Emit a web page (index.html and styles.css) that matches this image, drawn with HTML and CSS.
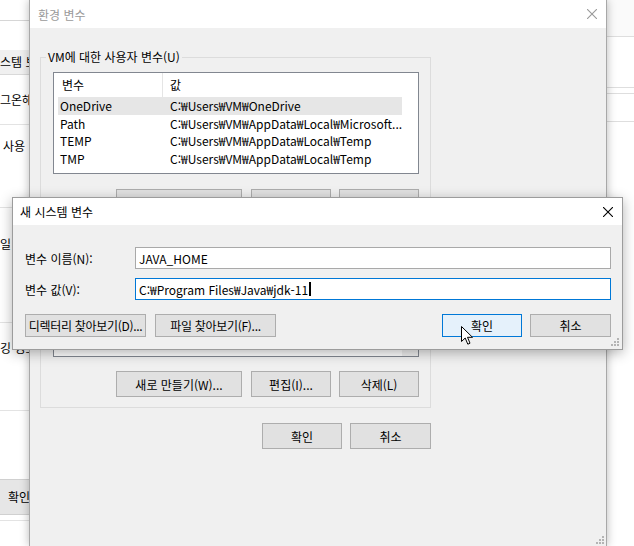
FILE: index.html
```html
<!DOCTYPE html>
<html lang="ko">
<head>
    <meta charset="UTF-8">
    <title>환경 변수</title>
    <link rel="stylesheet" href="styles.css">
</head>
<body>

    <!-- Background: system properties window (left) -->
    <div class="back-left">
        <div class="bl-title"></div>
        <div class="bl-tab">스템 보호</div>
        <div class="bl-row bl-a">그온해야</div>
        <div class="bl-row bl-b">사용</div>
        <div class="bl-row bl-c">일 설정</div>
        <div class="bl-row bl-d">깅 정보</div>
        <div class="bl-row bl-e"></div>
        <div class="bl-foot"><span class="bl-btn">확인</span></div>
    </div>

    <!-- Background: window on the right -->
    <div class="back-right">
        <div class="br-row br-1"></div>
        <div class="br-row br-2"></div>
        <div class="br-row br-3"></div>
        <div class="br-row br-4"></div>
    </div>

    <!-- Environment variables dialog -->
    <div class="env-dialog">
        <div class="titlebar inactive">
            <span class="title">환경 변수</span>
            <svg class="close" width="10" height="10" viewBox="0 0 10 10"><path d="M0 0L10 10M10 0L0 10" stroke="#9a9a9a" stroke-width="1.1"/></svg>
        </div>
        <div class="env-body">
            <fieldset class="group">
                <legend>VM에 대한 사용자 변수(U)</legend>
                <div class="listview">
                    <div class="lv-head">
                        <div class="lv-name">변수</div>
                        <div class="lv-value">값</div>
                    </div>
                    <div class="lv-row selected"><div class="lv-name">OneDrive</div><div class="lv-value">C:₩Users₩VM₩OneDrive</div></div>
                    <div class="lv-row"><div class="lv-name">Path</div><div class="lv-value">C:₩Users₩VM₩AppData₩Local₩Microsoft...</div></div>
                    <div class="lv-row"><div class="lv-name">TEMP</div><div class="lv-value">C:₩Users₩VM₩AppData₩Local₩Temp</div></div>
                    <div class="lv-row"><div class="lv-name">TMP</div><div class="lv-value">C:₩Users₩VM₩AppData₩Local₩Temp</div></div>
                </div>
                <div class="btn-row">
                    <button class="btn btn-wide">새로 만들기(N)...</button>
                    <button class="btn">편집(E)...</button>
                    <button class="btn">삭제(D)</button>
                </div>
            </fieldset>

            <!-- system variables (mostly hidden behind the new-variable dialog) -->
            <fieldset class="group group-sys">
                <legend>&nbsp;</legend>
                <div class="listview lv-sys">
                    <div class="lv-main"></div>
                    <div class="scrollbar"></div>
                </div>
                <div class="btn-row">
                    <button class="btn btn-wide">새로 만들기(W)...</button>
                    <button class="btn">편집(I)...</button>
                    <button class="btn">삭제(L)</button>
                </div>
            </fieldset>

            <div class="footer">
                <button class="btn">확인</button>
                <button class="btn btn-81">취소</button>
            </div>
        </div>
        <svg class="grip grip-env" width="9" height="9" viewBox="0 0 9 9"><g fill="#b4b4b4"><rect x="7" y="1" width="2" height="2"/><rect x="4" y="4" width="2" height="2"/><rect x="7" y="4" width="2" height="2"/><rect x="1" y="7" width="2" height="2"/><rect x="4" y="7" width="2" height="2"/><rect x="7" y="7" width="2" height="2"/></g></svg>
    </div>

    <!-- New system variable dialog -->
    <div class="new-dialog">
        <div class="titlebar">
            <span class="title">새 시스템 변수</span>
            <svg class="close" width="10" height="10" viewBox="0 0 10 10"><path d="M0 0L10 10M10 0L0 10" stroke="#000" stroke-width="1.1"/></svg>
        </div>
        <div class="new-body">
            <div class="field">
                <label>변수 이름(N):</label>
                <div class="textbox">JAVA_HOME</div>
            </div>
            <div class="field">
                <label>변수 값(V):</label>
                <div class="textbox focused"><span>C:₩Program Files₩Java₩jdk-11</span><span class="caret"></span></div>
            </div>
            <div class="new-buttons">
                <div class="btn-group">
                    <button class="btn btn-browse">디렉터리 찾아보기(D)...</button>
                    <button class="btn btn-browse">파일 찾아보기(F)...</button>
                </div>
                <div class="btn-group">
                    <button class="btn btn-default">확인</button>
                    <button class="btn btn-81">취소</button>
                </div>
            </div>
        </div>
        <svg class="grip grip-new" width="9" height="9" viewBox="0 0 9 9"><g fill="#b4b4b4"><rect x="7" y="1" width="2" height="2"/><rect x="4" y="4" width="2" height="2"/><rect x="7" y="4" width="2" height="2"/><rect x="1" y="7" width="2" height="2"/><rect x="4" y="7" width="2" height="2"/><rect x="7" y="7" width="2" height="2"/></g></svg>
    </div>

    <!-- Mouse pointer -->
    <svg class="cursor" width="13" height="20" viewBox="0 0 13 20"><path d="M0.5 0.5V15.5L4.2 12L6.8 18.2L9 17.2L6.5 11.3H11.5Z" fill="#fff" stroke="#000" stroke-width="1" stroke-linejoin="round"/></svg>

</body>
</html>
```

FILE: styles.css
```css
/* General */
body, html {
    margin: 0;
    padding: 0;
    width: 634px;
    height: 546px;
    overflow: hidden;
    background-color: #fff;
    font-family: "Noto Sans CJK KR", "Noto Sans", sans-serif;
    font-size: 12px;
    color: #000;
}

body {
    position: relative;
}

/* Windows behind the dialogs */
.back-left {
    position: absolute;
    left: 0;
    top: 0;
    width: 60px;
    height: 546px;
    background-color: #fff;
    overflow: hidden;
    white-space: nowrap;
}

.bl-title {
    height: 20px;
    border-bottom: 1px solid #d6d6d6;
    margin-bottom: 29px;
}

.bl-tab {
    height: 24px;
    line-height: 24px;
    background-color: #f0f0f0;
    border-bottom: 1px solid #d9d9d9;
}

.bl-row {
    border-bottom: 1px solid #e3e3e3;
    box-sizing: border-box;
    line-height: 24px;
}

.bl-a { height: 50px; padding-top: 13px; }
.bl-b { height: 83px; padding-top: 9px; padding-left: 3px; }
.bl-c { height: 115px; padding-top: 24px; }
.bl-d { height: 88px; padding-top: 13px; }
.bl-e { height: 68px; border-bottom: none; }

.bl-foot {
    height: 42px;
    border-bottom: 1px solid #e3e3e3;
    box-sizing: border-box;
}

.bl-btn {
    display: block;
    height: 34px;
    line-height: 34px;
    background-color: #e6e6e6;
    border-top: 1px solid #d0d0d0;
    border-bottom: 1px solid #d0d0d0;
    padding-left: 8px;
}

.back-right {
    position: absolute;
    left: 600px;
    top: 0;
    width: 34px;
    height: 546px;
    background-color: #fff;
}

.br-row {
    border-bottom: 1px solid #dedede;
}

.br-1 { height: 36px; background-color: #fafafa; }
.br-2 { height: 50px; }
.br-3 { height: 5px; }
.br-4 { height: 27px; }

/* Shared dialog pieces */
.titlebar {
    display: flex;
    align-items: center;
    justify-content: space-between;
    height: 28px;
    background-color: #fff;
    padding-left: 8px;
    padding-right: 9px;
    box-sizing: border-box;
}

.titlebar.inactive .title {
    color: #9a9a9a;
}

.close {
    display: block;
}

.btn {
    font-family: inherit;
    font-size: 12px;
    color: #000;
    background-color: #e1e1e1;
    border: 1px solid #adadad;
    border-radius: 0;
    padding: 0;
    margin: 0;
    height: 26px;
    width: 80px;
    box-sizing: border-box;
    white-space: nowrap;
}

.btn-wide { width: 126px; }
.btn-81 { width: 81px; }

.grip {
    position: absolute;
    display: block;
}

/* Environment variables dialog */
.env-dialog {
    position: absolute;
    left: 29px;
    top: 0;
    width: 578px;
    height: 546px;
    box-sizing: border-box;
    background-color: #f0f0f0;
    border-left: 1px solid #a8a8a8;
    border-right: 1px solid #a8a8a8;
    box-shadow: 0 0 9px rgba(0, 0, 0, 0.28);
}

.env-body {
    padding-left: 10px;
    width: 391px;
}

.group {
    margin: 21px 0 0 0;
    padding: 7px 11px 9px 12px;
    border: 1px solid #dcdcdc;
    min-width: 0;
}

.group legend {
    padding: 0 2px;
    margin-left: -7px;
    line-height: 16px;
}

.group-sys {
    margin-top: 10px;
    padding-bottom: 10px;
}

.listview {
    height: 102px;
    box-sizing: border-box;
    background-color: #fff;
    border: 1px solid #828790;
    overflow: hidden;
}

.lv-head,
.lv-row {
    display: flex;
    width: 344px;
    margin-left: 4px;
    white-space: nowrap;
}

.lv-head {
    height: 24px;
    line-height: 24px;
}

.lv-head .lv-name {
    padding-left: 4px;
    border-right: 1px solid #e5e5e5;
}

.lv-row {
    height: 17.5px;
    line-height: 17.5px;
}

.lv-row.selected {
    background-color: #e6e6e6;
}

.lv-name {
    width: 105px;
    box-sizing: border-box;
    padding-left: 2px;
    overflow: hidden;
}

.lv-value {
    flex: 1;
    padding-left: 7px;
    overflow: hidden;
}

.lv-sys {
    display: flex;
    height: 99px;
}

.lv-sys .lv-main {
    flex: 1;
}

.scrollbar {
    width: 16px;
    background-color: #f0f0f0;
}

.btn-row {
    display: flex;
    justify-content: flex-end;
    gap: 8px;
    margin-top: 15px;
}

.btn-row .btn-wide {
    margin-right: 1px;
}

.group-sys .btn-row {
    margin-top: 14px;
}

.footer {
    display: flex;
    justify-content: flex-end;
    gap: 8px;
    margin-top: 15px;
}

.grip-env {
    right: 2px;
    bottom: 2px;
}

/* New system variable dialog */
.new-dialog {
    position: absolute;
    left: 12px;
    top: 197px;
    width: 611px;
    height: 153px;
    box-sizing: border-box;
    background-color: #f0f0f0;
    border: 1px solid #9c9c9c;
    box-shadow: 0 3px 12px rgba(0, 0, 0, 0.3);
}

.new-dialog .titlebar {
    height: 27px;
    padding-left: 7px;
}

.new-body {
    padding: 22px 11px 12px 12px;
}

.field {
    display: flex;
    align-items: center;
    margin-bottom: 9px;
}

.field label {
    width: 110px;
}

.textbox {
    flex: 1;
    display: flex;
    align-items: center;
    height: 22px;
    box-sizing: border-box;
    background-color: #fff;
    border: 1px solid #a9a9a9;
    padding-left: 3px;
    white-space: nowrap;
}

.textbox.focused {
    border-color: #0078d7;
}

.caret {
    width: 2px;
    height: 14px;
    margin-left: 1px;
    background-color: #000;
}

.new-buttons {
    display: flex;
    justify-content: space-between;
    margin-top: 14px;
}

.btn-group {
    display: flex;
    gap: 8px;
}

.btn-group .btn {
    height: 23px;
}

.btn-browse {
    width: 121px;
    letter-spacing: -0.3px;
}

.btn-browse:first-child {
    margin-right: 1px;
}

.btn-default {
    background-color: #e5f1fb;
    border-color: #0078d7;
}

.grip-new {
    right: 3px;
    bottom: 3px;
}

/* Pointer */
.cursor {
    position: absolute;
    left: 461px;
    top: 326px;
}
```
